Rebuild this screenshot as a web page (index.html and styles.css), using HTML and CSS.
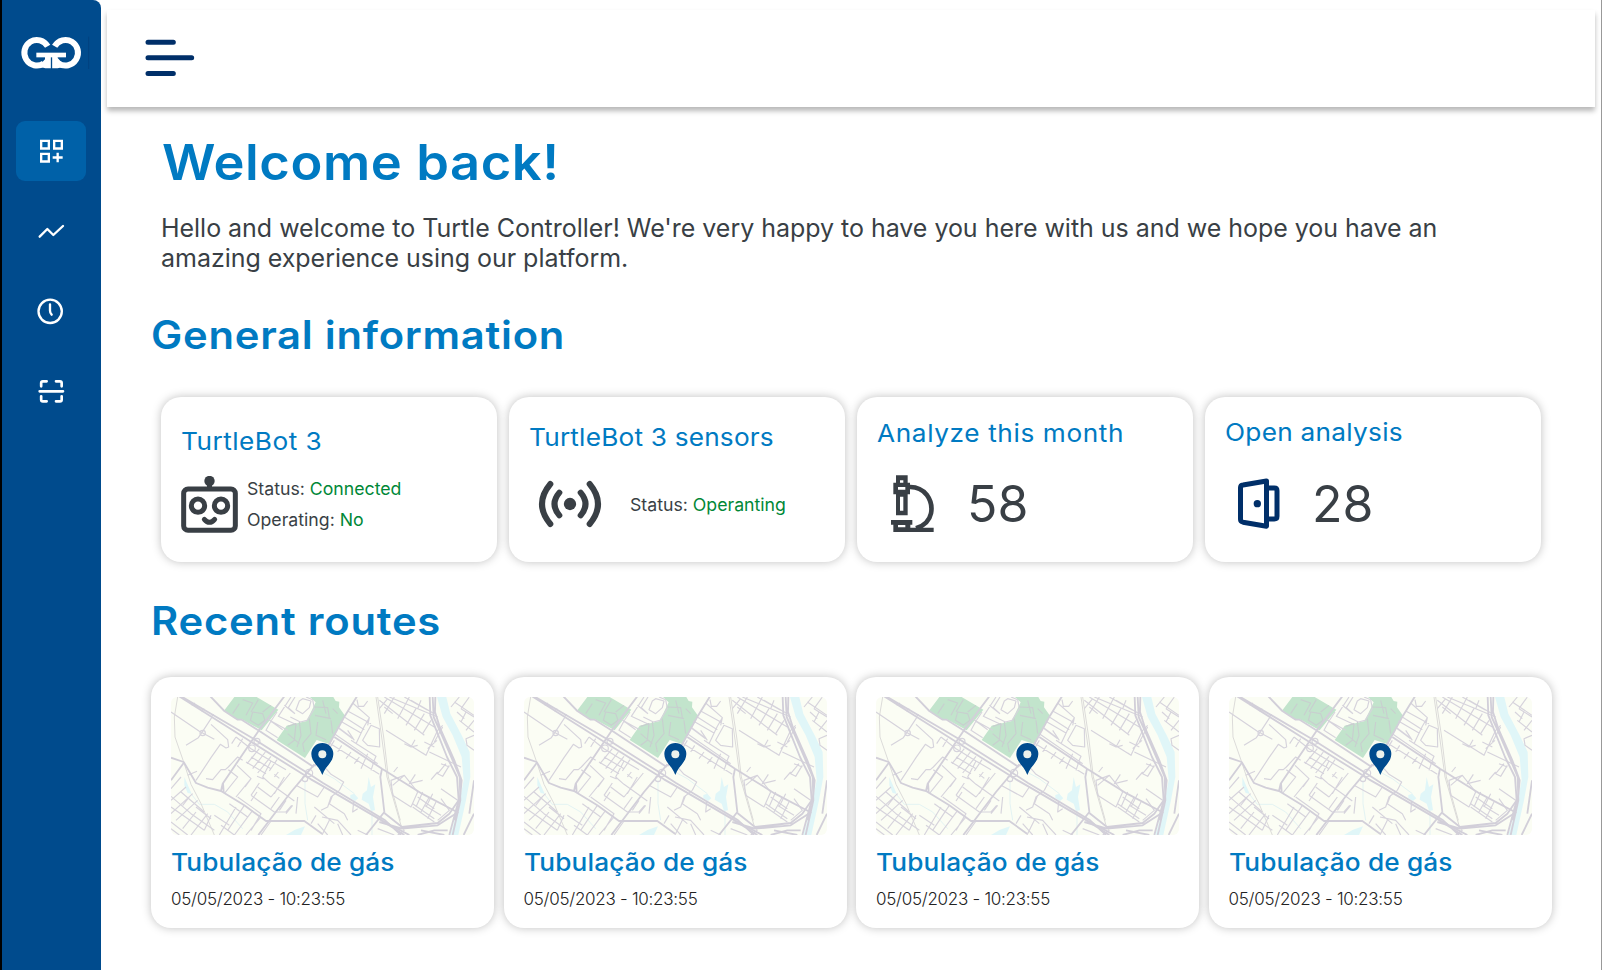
FILE: index.html
```html
<!DOCTYPE html>
<html lang="en">
<head>
<meta charset="utf-8">
<title>Turtle Controller</title>
<link rel="stylesheet" href="styles.css">
</head>
<body>
<svg class="defs" aria-hidden="true">
  <symbol id="map" viewBox="0 0 909 414">
    <rect width="909" height="414" fill="#fbfdf4"/>
    <g fill="#c2e4cc">
      <path d="M190 0H257L322 38L272 100L215 68L195 66L159 41Z"/>
      <path d="M417 0H487L494 12L505 14L504 31L522 56L475 141L437 129L402 183L317 129L347 86L407 72L434 16Z"/>
    </g>
    <g fill="#e0f6f8">
      <path d="M798 0H826L838 50L872 115L896 165L898 240L885 310L862 414H838L862 330L878 250L872 180L845 115L815 60Z"/>
      <path d="M593 240L600 270L613 262L606 300L612 340L600 342L593 320L572 308L575 290L588 280Z"/>
      <path d="M538 294L550 290L562 304L552 312L538 303Z"/>
      <path d="M40 240L52 268L62 290L50 288L40 265Z"/>
      <path d="M345 414L372 398L402 388L390 414Z"/>
    </g>
    <g fill="none" stroke="#e3f3f3" stroke-width="3">
      <path d="M60 290L85 322L130 322L170 345L215 395M402 250V320L410 370M453 225L490 245L550 290M603 342V414"/>
    </g>
    <g fill="none" stroke="#dcdbd9" stroke-width="3">
      <path d="M20 0L10 60L12 120L38 195L60 262L90 320L130 414M615 0L632 120L648 240L690 385L700 400M620 0L638 120L652 240L688 370"/>
    </g>
    <g fill="none" stroke="#d6d3dc" stroke-width="3.5" stroke-linejoin="round">
      <path d="M0 45L85 103L130 127M122 62L95 103L82 122L45 145M120 82L170 128L173 150L165 153L148 142L120 182L75 250M50 235L78 223M105 245L125 248L150 218H163L172 210L200 180L215 190M62 25L72 18M90 42L100 35M120 60L128 52"/>
      <circle cx="95" cy="108" r="8"/><circle cx="258" cy="133" r="9"/><circle cx="243" cy="154" r="10"/><circle cx="414" cy="228" r="11"/><circle cx="402" cy="246" r="8"/>
      <path d="M195 120L240 155L300 192L345 218M195 120L182 140M215 125L200 150M198 205L240 245L222 270M240 245L195 300M172 218L200 240L160 290M265 155L228 200M283 165L245 215M300 178L260 228M318 188L295 222M240 180L300 215M225 195L285 230M300 192L275 240L300 262L340 290L370 312M358 228L300 300M322 225L310 240M310 232L325 244M340 240L310 290M265 258L240 295M258 238L278 246M260 270L300 300M258 285L240 312M240 295L310 345H345L362 325M325 300L300 335M345 310L325 340M365 325L345 350M200 300L270 350L240 400M175 320L230 360M220 325L170 400M245 340L190 414M270 360L225 414M300 372L270 414M195 330L145 414"/>
      <path d="M0 275L30 240M0 310L45 270M0 350L65 290M15 370L80 310M35 395L75 345M60 414L110 350M0 298L60 350L130 400M30 285L100 345M0 330L100 400M0 375L50 414M0 395L25 414M75 330L120 365M55 300L35 325M120 355L100 400M150 385L190 414M130 355L175 385"/>
      <path d="M360 0L322 58L380 85M340 25L372 50M318 45L300 72L350 100M290 65L335 98M300 72L285 100L320 122M372 50L352 32L372 0M385 12L375 38L395 50L415 32L420 12L395 5ZM358 60L388 75L408 70L430 35L425 8L405 0"/>
      <path d="M205 20L185 50M215 8L245 18L225 55M262 8L240 45M245 45L275 50L282 70L262 85L238 70ZM300 25L275 45" stroke="#c8cfcf"/>
      <path d="M350 88L375 80L370 130L350 145M385 75L390 115L378 150M415 65L420 110L395 140L400 165M432 55L480 65M430 30L470 32L475 62M455 10L465 50M485 35L500 50M440 75L435 115L465 128M480 70L485 110M350 110L385 140" stroke="#c8cfcf"/>
      <path d="M545 18L595 62L580 88L555 140M530 42L600 80M520 60L580 98M508 72L570 108M500 90L540 120M558 8L562 28H578L590 12M595 62L590 85M600 85L625 95L626 150L590 145L575 130ZM505 95L545 125M530 100L550 130M490 130L475 155M512 145L500 165M540 165L525 185M565 180L550 200M590 170L570 215M610 190L600 220M490 110L620 200M475 138L625 232M540 130L615 178L605 200"/>
      <path d="M650 5L625 35M670 0L640 50M625 10L760 115M640 0L790 90M655 0L800 60M715 0L680 65M735 35L705 85M760 50L730 100M780 70L755 110M700 0L770 40M640 30L665 50M720 10L790 50M750 10L740 35M645 100L765 175L800 100L815 85M732 128L720 150L740 145M765 175L755 168M760 135L790 150M798 130L770 155M775 165L870 210M815 90L790 135M700 140L720 150"/>
      <path d="M840 30L865 0M870 35L909 60M850 15L909 55M885 45L870 75M909 70L885 100M865 70L909 105M858 45L880 65M909 115L885 125L888 145L909 160M895 0L870 35M825 200L800 230L815 238L835 205M800 225L780 248M835 210L810 200"/>
      <path d="M660 250L700 235L740 285L720 330L665 295ZM733 232L715 260L755 250M680 210L668 225M740 300L790 335M755 285L735 330M775 300L750 345M795 315L770 365M810 305L835 340L800 370M760 325L810 355M725 320L790 365M725 330L790 375M810 275L860 310M785 290L765 330M700 235L665 265"/>
      <path d="M465 215L480 232L518 255L505 280M505 280L480 300L470 330L450 340M485 295L475 320L520 350M548 315L545 345L560 335M453 360L500 370L540 414M520 350L530 370M430 330L490 380M435 355L420 380M375 265L440 300L460 270M440 380L470 414M475 370L453 414M500 380L515 414M380 300L375 350M700 400L680 414M620 395L670 414M560 400L590 414"/>
    </g>
    <g fill="none" stroke="#d2cfd9" stroke-width="5.5" stroke-linejoin="round">
      <path d="M24 -2L240 134L420 247L453 266L633 371L700 414M34 0L245 124L425 238L456 258L640 368L690 414"/>
      <path d="M118 -2L160 42L200 68L212 68L262 100L428 210M340 -2L265 98L155 260L150 282M156 258L158 285"/>
      <path d="M0 182L38 195L75 258L110 272L150 282L220 325L285 372H400L453 410M0 250L38 198M430 202L360 285L262 414M558 -2L522 56L475 141L430 208"/>
      <path d="M490 120L633 215L753 290L858 345M633 215L628 240L640 345L585 414"/>
      <path d="M776 0L778 55L800 110L828 180L858 240L863 310L835 414M785 0L788 60L815 120L845 190L866 240L868 310L845 414M793 0L792 45L808 95L850 190L872 250L865 325L850 370"/>
      <path d="M640 348L693 390L800 378L835 350L863 310M625 375L693 395L800 385L862 345M633 371L715 414M740 414L790 400L830 400M750 400L820 414M909 350L878 414M909 250L895 350"/>
    </g>
    <path d="M454 234C445 207 421 196 421 171A33 33 0 0 1 487 171C487 196 463 207 454 234Z" fill="#004b8e"/>
    <circle cx="454" cy="172" r="12" fill="#edf2ec"/>
  </symbol>
</svg>

<aside class="sidebar">
  <svg class="logo" viewBox="60 105 210 108">
    <g fill="none" stroke="#fff" stroke-width="18">
      <path d="M143 139A37.500 38.500 0 1 0 131 190.500"/>
      <path d="M164 139A37.500 38.500 0 1 1 176 190.500"/>
      <path d="M109 165H198" stroke-width="14"/>
    </g>
    <path d="M135 160H152.500V205H136L124 202V190L135 178ZM156.500 160H173V174L186 188V202L173 205H156.500Z" fill="#fff"/>
    <path d="M266 110V207" stroke="#003d78" stroke-width="2"/>
  </svg>
  <nav class="nav">
    <a class="nav-item nav-item--active"><svg viewBox="48 364 210 180" fill="none" stroke="#fff" stroke-width="7">
      <path d="M123.500 423.500H146.500V446.500H123.500ZM162.500 423.500H185.500V446.500H162.500ZM123.500 462.500H146.500V485.500H123.500Z"/><path d="M173 459V488M158 473.500H188"/></svg></a>
    <a class="nav-item"><svg viewBox="48 4 210 180" fill="none" stroke="#fff" stroke-width="7" stroke-linecap="round" stroke-linejoin="round">
      <path d="M119 111L142 88L160 106L189 79"/></svg></a>
    <a class="nav-item"><svg viewBox="48 244 210 180" fill="none" stroke="#fff" stroke-width="7" stroke-linecap="round" stroke-linejoin="round">
      <circle cx="150.500" cy="335" r="35"/><path d="M150 314V333Q150 340 155 345"/></svg></a>
    <a class="nav-item"><svg viewBox="48 484 210 180" fill="none" stroke="#fff" stroke-width="8" stroke-linecap="round" stroke-linejoin="round">
      <path d="M123.500 560V550Q123.500 545 128.500 545H140M168 545H180Q185 545 185 550V560M123.500 590V600Q123.500 605 128.500 605H140M168 605H180Q185 605 185 600V590M119 575H189"/></svg></a>
  </nav>
</aside>

<main class="main">
  <header class="topbar">
    <svg class="menu" viewBox="435 115 150 116" stroke="#002f69" stroke-width="15" stroke-linecap="round"><path d="M444 127H520M444 174H575M444 221H520"/></svg>
  </header>
  <div class="content">
    <h1 class="welcome">Welcome back!</h1>
    <p class="intro">Hello and welcome to Turtle Controller! We're very happy to have you here with us and we hope you have an amazing experience using our platform.</p>

    <h2 class="heading heading--info">General information</h2>
    <section class="info-grid">
      <article class="info-card">
        <h3 class="card-title title-bot">TurtleBot 3</h3>
        <div class="info-row row-bot">
          <svg class="icon-bot" viewBox="93 288 171 171" fill="none" stroke="#393f45" stroke-width="15">
            <rect x="101" y="327" width="155" height="124" rx="13"/><path d="M178.500 305V325"/><circle cx="178.500" cy="303" r="15.500" fill="#393f45" stroke="none"/>
            <circle cx="144" cy="377" r="20"/><circle cx="213" cy="377" r="20"/><path d="M163 418Q178.500 436 194 418" stroke-linecap="round"/></svg>
          <div class="status"><div>Status: <span class="ok">Connected</span></div><div>Operating: <span class="ok">No</span></div></div>
        </div>
      </article>
      <article class="info-card">
        <h3 class="card-title title-sensors">TurtleBot 3 sensors</h3>
        <div class="info-row row-sensors">
          <svg class="icon-signal" viewBox="87 297 246 150" fill="none" stroke="#393f45" stroke-width="18" stroke-linecap="round">
            <circle cx="210" cy="372" r="18.500" fill="#393f45" stroke="none"/>
            <path d="M178 338Q149 372 178 406M242 338Q271 372 242 406M151 312Q101 372 151 432M269 312Q319 372 269 432"/></svg>
          <div class="status">Status: <span class="ok">Operanting</span></div>
        </div>
      </article>
      <article class="info-card">
        <h3 class="card-title title-month">Analyze this month</h3>
        <div class="info-row row-month">
          <svg class="icon-lg" viewBox="81 284 210 180">
            <path fill="#393f45" fill-rule="evenodd" d="M138 288H173V310H180V345H173V408H138V345H130V310H138ZM150 303V310H160V303ZM144 323V331H166V323ZM150 352V394H160V352ZM123 422H187V436H181V445H251V458H130V436H123ZM144 437V444H166V437Z"/>
            <path d="M179 323Q210 322 230 346Q249 372 243 402Q236 435 198 447" fill="none" stroke="#393f45" stroke-width="14"/></svg>
          <span class="count">58</span>
        </div>
      </article>
      <article class="info-card">
        <h3 class="card-title title-open">Open analysis</h3>
        <div class="info-row row-open">
          <svg class="icon-lg" viewBox="75 284 210 180" fill="none" stroke="#002f69" stroke-width="15" stroke-linejoin="round">
            <path d="M129 317Q121.500 318 121.500 325V420Q121.500 427 129 428.500L199.500 440.500V305ZM203 326H223Q231 326 231 334V411Q231 419 223 419H203"/><circle cx="172" cy="373" r="11" fill="#002f69" stroke="none"/></svg>
          <span class="count">28</span>
        </div>
      </article>
    </section>

    <h2 class="heading heading--routes">Recent routes</h2>
    <section class="route-grid">
      <article class="route-card"><svg class="map"><use href="#map"/></svg><h3 class="card-title title-route">Tubulação de gás</h3><time class="date">05/05/2023 - 10:23:55</time></article>
      <article class="route-card"><svg class="map"><use href="#map"/></svg><h3 class="card-title title-route">Tubulação de gás</h3><time class="date">05/05/2023 - 10:23:55</time></article>
      <article class="route-card"><svg class="map"><use href="#map"/></svg><h3 class="card-title title-route">Tubulação de gás</h3><time class="date">05/05/2023 - 10:23:55</time></article>
      <article class="route-card"><svg class="map"><use href="#map"/></svg><h3 class="card-title title-route">Tubulação de gás</h3><time class="date">05/05/2023 - 10:23:55</time></article>
    </section>
  </div>
</main>
</body>
</html>
```
FILE: styles.css
```css
* { box-sizing: border-box; margin: 0; padding: 0; }
body {
  display: flex;
  height: 970px;
  overflow: hidden;
  background: #fff;
  border-left: 2px solid #000;
  border-right: 1px solid #999;
  font-family: Inter, "Liberation Sans", sans-serif;
  color: #393f45;
}
svg { display: block; flex: none; }
.defs { position: absolute; width: 0; height: 0; }

.sidebar {
  flex: none;
  width: 99px;
  height: 970px;
  background: #004b8d;
  border-top-right-radius: 8px;
}
.logo { width: 70px; height: 36px; margin: 35px 0 0 18px; }
.nav { display: flex; flex-direction: column; gap: 20px; margin: 50.400px 0 0 14px; }
.nav-item { width: 70px; height: 60px; border-radius: 9px; }
.nav-item--active { background: #0061a8; }
.nav-item svg { width: 70px; height: 60px; }

.main { flex: 1; min-width: 0; padding-top: 10px; }
.topbar {
  height: 97px;
  margin: 0 6px;
  padding: 28px 0 0 38px;
  background: #fff;
  box-shadow: 0 4px 5px rgba(0, 0, 0, .28);
}
.menu { width: 50px; height: 39px; }
.content { padding: 26px 50px 0; }

/* Titles are set slightly wide */
.welcome, .heading, .card-title { transform-origin: 0 50%; transform: scaleX(1.07); white-space: nowrap; }

.welcome {
  margin-left: 11px;
  font-size: 49px;
  line-height: 60px;
  font-weight: 600;
  letter-spacing: .55px;
  color: #007ac2;
}
.intro { width: 1300px; margin: 20px 0 37px 10px; font-size: 25px; line-height: 30px; letter-spacing: -.03px; }
.heading { font-size: 39px; line-height: 50px; font-weight: 600; color: #007ac2; }
.heading--info { letter-spacing: .7px; }
.heading--routes { margin-top: 34px; letter-spacing: .75px; }

.info-grid {
  display: grid;
  grid-template-columns: repeat(4, 336px);
  gap: 12px;
  margin: 36.600px 0 0 10px;
}
.info-card, .route-card {
  background: #fff;
  border-radius: 20px;
  box-shadow: 0 0 10px rgba(0, 0, 0, .25);
}
.info-card {
  display: flex;
  flex-direction: column;
  justify-content: center;
  gap: 20px;
  height: 165px;
  padding: 0 20px;
}
.card-title { font-size: 24.5px; line-height: 30px; font-weight: 400; color: #007ac2; }
.title-bot { letter-spacing: .45px; }
.title-sensors { letter-spacing: .18px; }
.title-month { letter-spacing: .57px; }
.title-open { letter-spacing: .25px; }
.title-route { margin-top: 12px; font-weight: 500; letter-spacing: .13px; }

.info-row { display: flex; align-items: center; }
.row-bot { height: 57px; gap: 9px; }
.row-sensors { height: 65px; gap: 19px; }
.row-month { height: 72px; gap: 20px; }
.row-open { height: 75px; gap: 17px; }
.icon-bot { width: 57px; height: 57px; }
.icon-signal { width: 82px; height: 50px; }
.icon-lg { width: 70px; height: 60px; }
.status { font-size: 17.7px; line-height: 31px; white-space: nowrap; }
.ok { color: #008837; }
.count { font-size: 50px; line-height: 60px; font-weight: 400; }

.route-grid {
  display: grid;
  grid-template-columns: repeat(4, 343px);
  gap: 9.500px;
  margin-top: 31.400px;
}
.route-card { height: 251.500px; padding: 20px; }
.map { width: 303px; height: 138px; border-radius: 6px; }
.date {
  display: block;
  margin-top: 10px;
  font-size: 17px;
  line-height: 24px;
  font-weight: 300;
  letter-spacing: -.27px;
  color: #222;
}
```
